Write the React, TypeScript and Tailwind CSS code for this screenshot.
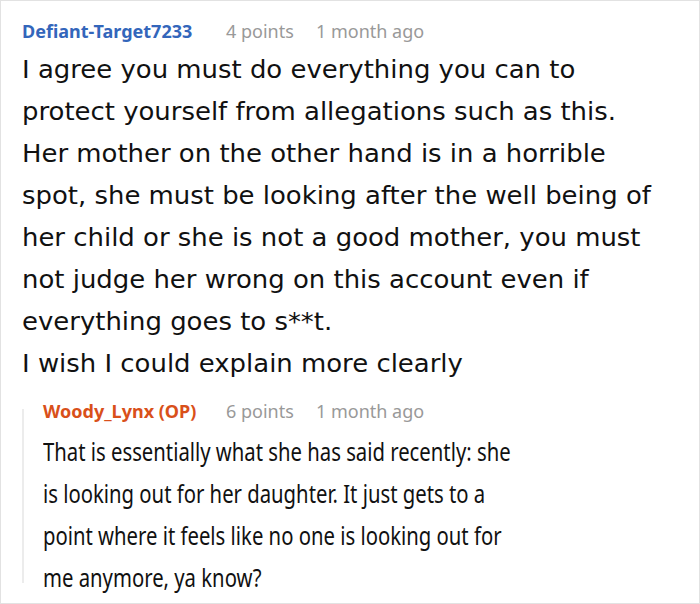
import React from 'react';

type Meta = {
  name: string;
  points: string;
  time: string;
  nameClass: string;
};

const firstLines: string[] = [
  'I agree you must do everything you can to',
  'protect yourself from allegations such as this.',
  'Her mother on the other hand is in a horrible',
  'spot, she must be looking after the well being of',
  'her child or she is not a good mother, you must',
  'not judge her wrong on this account even if',
  'everything goes to s**t.',
  'I wish I could explain more clearly',
];

const replyLines: string[] = [
  'That is essentially what she has said recently: she',
  'is looking out for her daughter. It just gets to a',
  'point where it feels like no one is looking out for',
  'me anymore, ya know?',
];

function CommentHeader({ name, points, time, nameClass }: Meta): JSX.Element {
  return (
    <div
      className="flex items-center h-[22px] text-[18px] leading-none"
      style={{ fontFamily: '"Noto Sans", "Open Sans", sans-serif' }}
    >
      <span className={`font-bold ${nameClass}`}>{name}</span>
      <span className="text-[#999999] w-[90px]">{points}</span>
      <span className="text-[#999999]">{time}</span>
    </div>
  );
}

function App(): JSX.Element {
  return (
    <div className="w-[700px] h-[604px] bg-white border border-[#e2e2e2] overflow-hidden text-[#111111]">
      <div className="pl-[21px] pt-[19px]">
        <CommentHeader
          name="Defiant-Target7233"
          points="4 points"
          time="1 month ago"
          nameClass="text-[#3366bb] w-[204px]"
        />
        <div
          className="mt-[7px] text-[24px] leading-[42px] whitespace-nowrap origin-left scale-x-[1.08]"
          style={{ fontFamily: '"DejaVu Sans", Verdana, sans-serif' }}
        >
          {firstLines.map((line) => (
            <div key={line}>{line}</div>
          ))}
        </div>
        <div className="mt-[15px] flex">
          <div className="w-[2px] bg-[#ececec] mt-[9px] mb-[15px]" />
          <div className="pl-[19px]">
            <CommentHeader
              name="Woody_Lynx (OP)"
              points="6 points"
              time="1 month ago"
              nameClass="text-[#d9501a] w-[183px]"
            />
            <div
              className="mt-[8px] text-[26px] leading-[42px] whitespace-nowrap origin-left scale-x-[0.78]"
              style={{ fontFamily: '"Noto Sans", "Open Sans", sans-serif' }}
            >
              {replyLines.map((line) => (
                <div key={line}>{line}</div>
              ))}
            </div>
          </div>
        </div>
      </div>
    </div>
  );
}

export default App;
